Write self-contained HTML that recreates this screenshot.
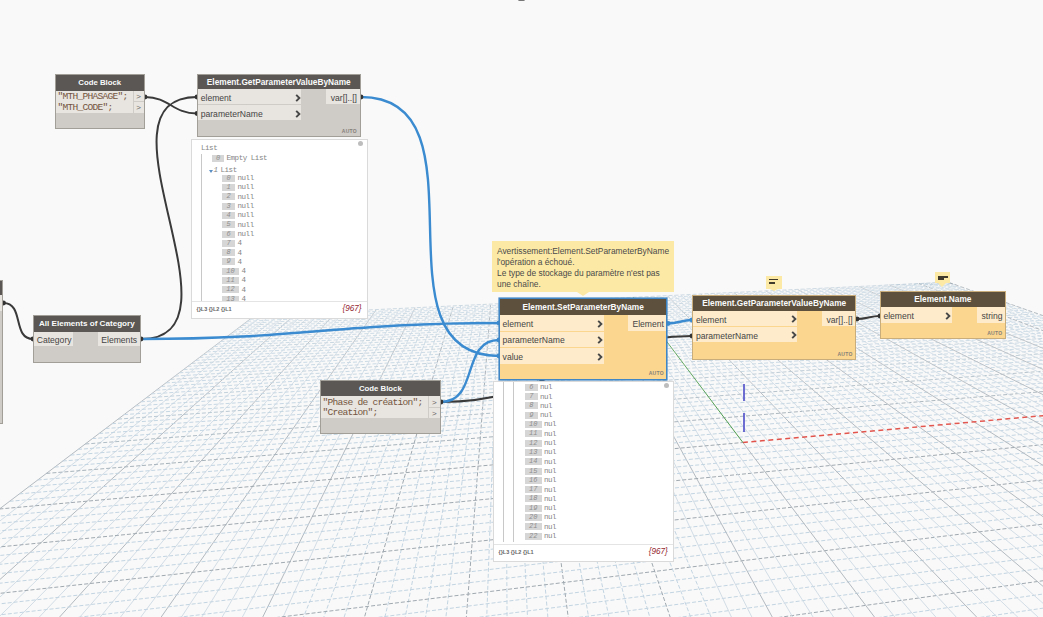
<!DOCTYPE html><html><head><meta charset="utf-8"><style>
*{margin:0;padding:0;box-sizing:border-box}
html,body{width:1043px;height:617px;overflow:hidden;background:#f9f9f9;font-family:"Liberation Sans",sans-serif}
svg{position:absolute;left:0;top:0}
.n{position:absolute;background:#cfcbc6;box-shadow:0 0 0 1px #a29e98}
.n>div{position:absolute;white-space:nowrap}
.h{background:#5a5754;color:#fbfbfb;font-weight:bold;font-size:8.3px;text-align:center;left:0;right:0;top:0}
.p{background:#e8e4df;color:#454545;font-size:8.6px}
.y{background:#fbd68e;box-shadow:0 0 0 1px #c9ae7c}
.y>.h{background:#5d513e}
.y>.p{background:#fdebcb}
.sel{box-shadow:0 0 0 1.6px #4186c4}
.au{font-size:5px;font-weight:bold;color:#858079;letter-spacing:0.3px}
.ch{font-size:7.5px;font-weight:bold;color:#454545}
.pv{position:absolute;background:#fff;box-shadow:0 0 0 1px #dadada;overflow:hidden}
.pv>div{position:absolute;white-space:nowrap}
.m{font-family:"Liberation Mono",monospace}
.bd{background:#d6d6d6;color:#8e8e8e;font-style:italic;font-size:7px;text-align:center}
.it{color:#858585;font-size:7.5px;letter-spacing:-0.45px}
</style></head><body>
<svg width="1043" height="617" viewBox="0 0 1043 617"><line x1="-1934.9" y1="1974.3" x2="255.0" y2="315.4" stroke="#b3bac0" stroke-width="1"/>
<line x1="2349.9" y1="1992.2" x2="2999.1" y2="1390.4" stroke="#b3bac0" stroke-width="1"/>
<line x1="-1870.2" y1="1983.5" x2="263.3" y2="315.0" stroke="#d2dde6" stroke-width="1"/>
<line x1="1961.1" y1="1993.6" x2="2998.2" y2="1186.7" stroke="#d2dde6" stroke-width="1"/>
<line x1="-1804.9" y1="1992.7" x2="271.6" y2="314.6" stroke="#d2dde6" stroke-width="1"/>
<line x1="1572.0" y1="1995.0" x2="2997.5" y2="1039.4" stroke="#d2dde6" stroke-width="1"/>
<line x1="-1683.9" y1="1955.9" x2="279.8" y2="314.2" stroke="#d2dde6" stroke-width="1"/>
<line x1="1182.8" y1="1996.3" x2="2918.0" y2="974.3" stroke="#d2dde6" stroke-width="1"/>
<line x1="-1618.6" y1="1964.9" x2="288.0" y2="313.8" stroke="#d2dde6" stroke-width="1"/>
<line x1="793.3" y1="1997.7" x2="2812.4" y2="937.2" stroke="#d2dde6" stroke-width="1"/>
<line x1="-1552.6" y1="1973.9" x2="296.2" y2="313.4" stroke="#b3bac0" stroke-width="1"/>
<line x1="403.6" y1="1999.1" x2="2715.5" y2="903.2" stroke="#b3bac0" stroke-width="1"/>
<line x1="-1486.1" y1="1983.0" x2="304.4" y2="313.1" stroke="#d2dde6" stroke-width="1"/>
<line x1="35.5" y1="1991.0" x2="2626.5" y2="871.9" stroke="#d2dde6" stroke-width="1"/>
<line x1="-1418.8" y1="1992.2" x2="312.5" y2="312.7" stroke="#d2dde6" stroke-width="1"/>
<line x1="-352.7" y1="1992.4" x2="2544.4" y2="843.1" stroke="#c3d5e2" stroke-width="1" stroke-dasharray="4 2"/>
<line x1="-1305.3" y1="1955.5" x2="320.6" y2="312.3" stroke="#d2dde6" stroke-width="1"/>
<line x1="-741.2" y1="1993.8" x2="2468.4" y2="816.4" stroke="#c3d5e2" stroke-width="1" stroke-dasharray="4 2"/>
<line x1="-1238.1" y1="1964.4" x2="328.6" y2="311.9" stroke="#d2dde6" stroke-width="1"/>
<line x1="-1129.8" y1="1995.1" x2="2397.9" y2="791.6" stroke="#c3d5e2" stroke-width="1" stroke-dasharray="4 2"/>
<line x1="-1170.3" y1="1973.5" x2="336.6" y2="311.5" stroke="#b3bac0" stroke-width="1"/>
<line x1="-1518.7" y1="1996.5" x2="2332.2" y2="768.5" stroke="#a0a9b0" stroke-width="1" stroke-dasharray="4 2"/>
<line x1="-1101.7" y1="1982.6" x2="344.6" y2="311.1" stroke="#d2dde6" stroke-width="1"/>
<line x1="-1907.8" y1="1997.9" x2="2271.0" y2="747.0" stroke="#c3d5e2" stroke-width="1" stroke-dasharray="4 2"/>
<line x1="-1032.5" y1="1991.8" x2="352.6" y2="310.7" stroke="#d2dde6" stroke-width="1"/>
<line x1="-1772.3" y1="1851.2" x2="2213.7" y2="726.9" stroke="#c3d5e2" stroke-width="1" stroke-dasharray="4 2"/>
<line x1="-926.6" y1="1955.1" x2="360.5" y2="310.4" stroke="#d2dde6" stroke-width="1"/>
<line x1="-1579.9" y1="1705.4" x2="2160.0" y2="708.0" stroke="#c3d5e2" stroke-width="1" stroke-dasharray="4 2"/>
<line x1="-857.5" y1="1964.0" x2="368.4" y2="310.0" stroke="#d2dde6" stroke-width="1"/>
<line x1="-1417.5" y1="1582.4" x2="2109.6" y2="690.3" stroke="#c3d5e2" stroke-width="1" stroke-dasharray="4 2"/>
<line x1="-787.7" y1="1973.1" x2="376.3" y2="309.6" stroke="#b3bac0" stroke-width="1"/>
<line x1="-1278.5" y1="1477.1" x2="2062.2" y2="673.6" stroke="#a0a9b0" stroke-width="1" stroke-dasharray="4 2"/>
<line x1="-717.2" y1="1982.2" x2="384.1" y2="309.2" stroke="#d2dde6" stroke-width="1"/>
<line x1="-1158.3" y1="1386.0" x2="2017.5" y2="657.9" stroke="#c3d5e2" stroke-width="1" stroke-dasharray="4 2"/>
<line x1="-646.1" y1="1991.4" x2="391.9" y2="308.9" stroke="#d2dde6" stroke-width="1"/>
<line x1="-1053.3" y1="1306.5" x2="1975.2" y2="643.1" stroke="#c3d5e2" stroke-width="1" stroke-dasharray="4 2"/>
<line x1="-547.7" y1="1954.7" x2="399.7" y2="308.5" stroke="#d2dde6" stroke-width="1"/>
<line x1="-960.7" y1="1236.4" x2="1935.3" y2="629.1" stroke="#c3d5e2" stroke-width="1" stroke-dasharray="4 2"/>
<line x1="-476.7" y1="1963.6" x2="407.4" y2="308.1" stroke="#d2dde6" stroke-width="1"/>
<line x1="-878.6" y1="1174.1" x2="1897.5" y2="615.8" stroke="#c3d5e2" stroke-width="1" stroke-dasharray="4 2"/>
<line x1="-405.0" y1="1972.6" x2="415.1" y2="307.8" stroke="#b3bac0" stroke-width="1"/>
<line x1="-805.1" y1="1118.5" x2="1861.6" y2="603.2" stroke="#a0a9b0" stroke-width="1" stroke-dasharray="4 2"/>
<line x1="-332.6" y1="1981.7" x2="422.8" y2="307.4" stroke="#d2dde6" stroke-width="1"/>
<line x1="-739.1" y1="1068.5" x2="1827.6" y2="591.2" stroke="#c3d5e2" stroke-width="1" stroke-dasharray="4 2"/>
<line x1="-259.5" y1="1991.0" x2="430.5" y2="307.0" stroke="#c3d5e2" stroke-width="1" stroke-dasharray="4 2"/>
<line x1="-679.4" y1="1023.2" x2="1795.2" y2="579.8" stroke="#c3d5e2" stroke-width="1" stroke-dasharray="4 2"/>
<line x1="-168.6" y1="1954.2" x2="438.1" y2="306.7" stroke="#c3d5e2" stroke-width="1" stroke-dasharray="4 2"/>
<line x1="-625.2" y1="982.2" x2="1764.3" y2="569.0" stroke="#c3d5e2" stroke-width="1" stroke-dasharray="4 2"/>
<line x1="-95.7" y1="1963.2" x2="445.7" y2="306.3" stroke="#c3d5e2" stroke-width="1" stroke-dasharray="4 2"/>
<line x1="-575.7" y1="944.7" x2="1734.9" y2="558.7" stroke="#c3d5e2" stroke-width="1" stroke-dasharray="4 2"/>
<line x1="-22.1" y1="1972.2" x2="453.3" y2="305.9" stroke="#a0a9b0" stroke-width="1" stroke-dasharray="4 2"/>
<line x1="-530.4" y1="910.3" x2="1706.9" y2="548.8" stroke="#a0a9b0" stroke-width="1" stroke-dasharray="4 2"/>
<line x1="52.2" y1="1981.3" x2="460.8" y2="305.6" stroke="#c3d5e2" stroke-width="1" stroke-dasharray="4 2"/>
<line x1="-488.7" y1="878.8" x2="1680.0" y2="539.4" stroke="#c3d5e2" stroke-width="1" stroke-dasharray="4 2"/>
<line x1="127.3" y1="1990.5" x2="468.3" y2="305.2" stroke="#c3d5e2" stroke-width="1" stroke-dasharray="4 2"/>
<line x1="-450.2" y1="849.6" x2="1654.4" y2="530.4" stroke="#c3d5e2" stroke-width="1" stroke-dasharray="4 2"/>
<line x1="203.2" y1="1999.8" x2="475.8" y2="304.8" stroke="#c3d5e2" stroke-width="1" stroke-dasharray="4 2"/>
<line x1="-414.7" y1="822.7" x2="1629.9" y2="521.8" stroke="#c3d5e2" stroke-width="1" stroke-dasharray="4 2"/>
<line x1="285.4" y1="1962.7" x2="483.2" y2="304.5" stroke="#c3d5e2" stroke-width="1" stroke-dasharray="4 2"/>
<line x1="-381.6" y1="797.7" x2="1606.3" y2="513.5" stroke="#c3d5e2" stroke-width="1" stroke-dasharray="4 2"/>
<line x1="360.9" y1="1971.8" x2="490.7" y2="304.1" stroke="#a0a9b0" stroke-width="1" stroke-dasharray="4 2"/>
<line x1="-350.9" y1="774.4" x2="1583.8" y2="505.6" stroke="#a0a9b0" stroke-width="1" stroke-dasharray="4 2"/>
<line x1="437.2" y1="1980.9" x2="498.1" y2="303.8" stroke="#c3d5e2" stroke-width="1" stroke-dasharray="4 2"/>
<line x1="-322.2" y1="752.7" x2="1562.1" y2="498.0" stroke="#c3d5e2" stroke-width="1" stroke-dasharray="4 2"/>
<line x1="514.2" y1="1990.1" x2="505.4" y2="303.4" stroke="#c3d5e2" stroke-width="1" stroke-dasharray="4 2"/>
<line x1="-295.4" y1="732.4" x2="1541.3" y2="490.7" stroke="#c3d5e2" stroke-width="1" stroke-dasharray="4 2"/>
<line x1="592.1" y1="1999.4" x2="512.8" y2="303.1" stroke="#c3d5e2" stroke-width="1" stroke-dasharray="4 2"/>
<line x1="-270.3" y1="713.3" x2="1521.3" y2="483.6" stroke="#c3d5e2" stroke-width="1" stroke-dasharray="4 2"/>
<line x1="666.6" y1="1962.3" x2="520.1" y2="302.7" stroke="#c3d5e2" stroke-width="1" stroke-dasharray="4 2"/>
<line x1="-246.7" y1="695.4" x2="1502.1" y2="476.9" stroke="#c3d5e2" stroke-width="1" stroke-dasharray="4 2"/>
<line x1="744.1" y1="1971.3" x2="527.3" y2="302.4" stroke="#a0a9b0" stroke-width="1" stroke-dasharray="4 2"/>
<line x1="-224.5" y1="678.6" x2="1483.5" y2="470.4" stroke="#a0a9b0" stroke-width="1" stroke-dasharray="4 2"/>
<line x1="822.3" y1="1980.5" x2="534.6" y2="302.0" stroke="#c3d5e2" stroke-width="1" stroke-dasharray="4 2"/>
<line x1="-203.5" y1="662.8" x2="1465.7" y2="464.1" stroke="#c3d5e2" stroke-width="1" stroke-dasharray="4 2"/>
<line x1="901.3" y1="1989.7" x2="541.8" y2="301.7" stroke="#c3d5e2" stroke-width="1" stroke-dasharray="4 2"/>
<line x1="-183.8" y1="647.8" x2="1448.5" y2="458.0" stroke="#c3d5e2" stroke-width="1" stroke-dasharray="4 2"/>
<line x1="981.1" y1="1999.0" x2="549.0" y2="301.3" stroke="#c3d5e2" stroke-width="1" stroke-dasharray="4 2"/>
<line x1="-165.1" y1="633.6" x2="1431.9" y2="452.2" stroke="#c3d5e2" stroke-width="1" stroke-dasharray="4 2"/>
<line x1="1048.0" y1="1961.9" x2="556.2" y2="301.0" stroke="#c3d5e2" stroke-width="1" stroke-dasharray="4 2"/>
<line x1="-147.4" y1="620.2" x2="1415.8" y2="446.6" stroke="#c3d5e2" stroke-width="1" stroke-dasharray="4 2"/>
<line x1="1127.4" y1="1970.9" x2="563.3" y2="300.7" stroke="#a0a9b0" stroke-width="1" stroke-dasharray="4 2"/>
<line x1="-130.6" y1="607.5" x2="1400.3" y2="441.1" stroke="#a0a9b0" stroke-width="1" stroke-dasharray="4 2"/>
<line x1="1207.6" y1="1980.0" x2="570.5" y2="300.3" stroke="#c3d5e2" stroke-width="1" stroke-dasharray="4 2"/>
<line x1="-114.7" y1="595.4" x2="1385.4" y2="435.9" stroke="#c3d5e2" stroke-width="1" stroke-dasharray="4 2"/>
<line x1="1288.6" y1="1989.2" x2="577.6" y2="300.0" stroke="#c3d5e2" stroke-width="1" stroke-dasharray="4 2"/>
<line x1="-99.5" y1="583.9" x2="1370.9" y2="430.8" stroke="#c3d5e2" stroke-width="1" stroke-dasharray="4 2"/>
<line x1="1370.4" y1="1998.6" x2="584.6" y2="299.6" stroke="#d2dde6" stroke-width="1"/>
<line x1="-85.1" y1="573.0" x2="1356.9" y2="425.9" stroke="#c3d5e2" stroke-width="1" stroke-dasharray="4 2"/>
<line x1="1429.6" y1="1961.5" x2="591.7" y2="299.3" stroke="#d2dde6" stroke-width="1"/>
<line x1="-71.3" y1="562.6" x2="1343.3" y2="421.1" stroke="#c3d5e2" stroke-width="1" stroke-dasharray="4 2"/>
<line x1="1510.9" y1="1970.5" x2="598.7" y2="299.0" stroke="#b3bac0" stroke-width="1"/>
<line x1="-58.2" y1="552.6" x2="1330.2" y2="416.5" stroke="#a0a9b0" stroke-width="1" stroke-dasharray="4 2"/>
<line x1="1593.0" y1="1979.6" x2="605.7" y2="298.6" stroke="#d2dde6" stroke-width="1"/>
<line x1="-45.6" y1="543.1" x2="1317.4" y2="412.0" stroke="#c3d5e2" stroke-width="1" stroke-dasharray="4 2"/>
<line x1="1676.0" y1="1988.8" x2="612.6" y2="298.3" stroke="#d2dde6" stroke-width="1"/>
<line x1="-33.6" y1="534.0" x2="1305.1" y2="407.7" stroke="#c3d5e2" stroke-width="1" stroke-dasharray="4 2"/>
<line x1="1759.8" y1="1998.1" x2="619.6" y2="298.0" stroke="#d2dde6" stroke-width="1"/>
<line x1="-22.1" y1="525.3" x2="1293.1" y2="403.5" stroke="#c3d5e2" stroke-width="1" stroke-dasharray="4 2"/>
<line x1="1811.3" y1="1961.0" x2="626.5" y2="297.6" stroke="#d2dde6" stroke-width="1"/>
<line x1="-11.1" y1="517.0" x2="1281.5" y2="399.4" stroke="#c3d5e2" stroke-width="1" stroke-dasharray="4 2"/>
<line x1="1912.0" y1="1993.2" x2="742.9" y2="442.5" stroke="#b3bac0" stroke-width="1"/>
<line x1="-0.6" y1="509.0" x2="742.9" y2="442.5" stroke="#a0a9b0" stroke-width="1" stroke-dasharray="4 2"/>
<line x1="1978.6" y1="1979.2" x2="640.2" y2="297.0" stroke="#d2dde6" stroke-width="1"/>
<line x1="9.6" y1="501.3" x2="1259.2" y2="391.6" stroke="#c3d5e2" stroke-width="1" stroke-dasharray="4 2"/>
<line x1="2063.6" y1="1988.4" x2="647.0" y2="296.6" stroke="#d2dde6" stroke-width="1"/>
<line x1="19.3" y1="493.9" x2="1248.6" y2="387.8" stroke="#c3d5e2" stroke-width="1" stroke-dasharray="4 2"/>
<line x1="2149.4" y1="1997.7" x2="653.9" y2="296.3" stroke="#d2dde6" stroke-width="1"/>
<line x1="28.7" y1="486.8" x2="1238.2" y2="384.2" stroke="#c3d5e2" stroke-width="1" stroke-dasharray="4 2"/>
<line x1="2193.2" y1="1960.6" x2="660.6" y2="296.0" stroke="#d2dde6" stroke-width="1"/>
<line x1="37.7" y1="480.0" x2="1228.2" y2="380.6" stroke="#c3d5e2" stroke-width="1" stroke-dasharray="4 2"/>
<line x1="2278.4" y1="1969.6" x2="667.4" y2="295.7" stroke="#b3bac0" stroke-width="1"/>
<line x1="46.4" y1="473.4" x2="1218.4" y2="377.2" stroke="#a7b3bb" stroke-width="1" stroke-dasharray="4 2"/>
<line x1="2364.4" y1="1978.8" x2="674.1" y2="295.3" stroke="#d2dde6" stroke-width="1"/>
<line x1="54.7" y1="467.1" x2="1208.8" y2="373.8" stroke="#c3d5e2" stroke-width="1" stroke-dasharray="4 2"/>
<line x1="2403.6" y1="1942.4" x2="680.9" y2="295.0" stroke="#d2dde6" stroke-width="1"/>
<line x1="62.8" y1="461.0" x2="1199.5" y2="370.6" stroke="#c3d5e2" stroke-width="1" stroke-dasharray="4 2"/>
<line x1="2441.4" y1="1907.4" x2="687.5" y2="294.7" stroke="#d2dde6" stroke-width="1"/>
<line x1="70.5" y1="455.1" x2="1190.5" y2="367.4" stroke="#c3d5e2" stroke-width="1" stroke-dasharray="4 2"/>
<line x1="2477.7" y1="1873.8" x2="694.2" y2="294.4" stroke="#d2dde6" stroke-width="1"/>
<line x1="78.0" y1="449.4" x2="1181.7" y2="364.3" stroke="#c3d5e2" stroke-width="1" stroke-dasharray="4 2"/>
<line x1="2512.6" y1="1841.3" x2="700.8" y2="294.1" stroke="#b3bac0" stroke-width="1"/>
<line x1="85.3" y1="444.0" x2="1173.1" y2="361.3" stroke="#afbdc6" stroke-width="1" stroke-dasharray="4 2"/>
<line x1="2546.3" y1="1810.1" x2="707.5" y2="293.7" stroke="#d2dde6" stroke-width="1"/>
<line x1="92.3" y1="438.6" x2="1164.7" y2="358.3" stroke="#c3d5e2" stroke-width="1" stroke-dasharray="4 2"/>
<line x1="2578.8" y1="1780.0" x2="714.0" y2="293.4" stroke="#d2dde6" stroke-width="1"/>
<line x1="99.1" y1="433.5" x2="1156.5" y2="355.5" stroke="#c3d5e2" stroke-width="1" stroke-dasharray="4 2"/>
<line x1="2610.2" y1="1750.9" x2="720.6" y2="293.1" stroke="#d2dde6" stroke-width="1"/>
<line x1="105.6" y1="428.5" x2="1148.6" y2="352.7" stroke="#c3d5e2" stroke-width="1" stroke-dasharray="4 2"/>
<line x1="2640.5" y1="1722.8" x2="727.2" y2="292.8" stroke="#d2dde6" stroke-width="1"/>
<line x1="112.0" y1="423.7" x2="1140.8" y2="349.9" stroke="#c3d5e2" stroke-width="1" stroke-dasharray="4 2"/>
<line x1="2669.8" y1="1695.7" x2="733.7" y2="292.5" stroke="#b3bac0" stroke-width="1"/>
<line x1="118.1" y1="419.1" x2="1133.2" y2="347.3" stroke="#b7c7d2" stroke-width="1" stroke-dasharray="4 2"/>
<line x1="2698.0" y1="1669.5" x2="740.2" y2="292.2" stroke="#d2dde6" stroke-width="1"/>
<line x1="124.1" y1="414.6" x2="1125.8" y2="344.7" stroke="#c3d5e2" stroke-width="1" stroke-dasharray="4 2"/>
<line x1="2725.4" y1="1644.1" x2="746.6" y2="291.9" stroke="#d2dde6" stroke-width="1"/>
<line x1="129.9" y1="410.2" x2="1118.6" y2="342.1" stroke="#c3d5e2" stroke-width="1" stroke-dasharray="4 2"/>
<line x1="2751.9" y1="1619.6" x2="753.1" y2="291.6" stroke="#d2dde6" stroke-width="1"/>
<line x1="135.5" y1="405.9" x2="1111.5" y2="339.6" stroke="#c3d5e2" stroke-width="1" stroke-dasharray="4 2"/>
<line x1="2777.5" y1="1595.8" x2="759.5" y2="291.3" stroke="#d2dde6" stroke-width="1"/>
<line x1="140.9" y1="401.8" x2="1104.6" y2="337.2" stroke="#c3d5e2" stroke-width="1" stroke-dasharray="4 2"/>
<line x1="2802.4" y1="1572.8" x2="765.9" y2="290.9" stroke="#b3bac0" stroke-width="1"/>
<line x1="146.2" y1="397.8" x2="1097.8" y2="334.8" stroke="#bdceda" stroke-width="1" stroke-dasharray="4 2"/>
<line x1="2826.5" y1="1550.5" x2="772.3" y2="290.6" stroke="#d2dde6" stroke-width="1"/>
<line x1="151.3" y1="393.9" x2="1091.2" y2="332.5" stroke="#c3d5e2" stroke-width="1" stroke-dasharray="4 2"/>
<line x1="2849.8" y1="1528.8" x2="778.7" y2="290.3" stroke="#d2dde6" stroke-width="1"/>
<line x1="156.3" y1="390.2" x2="1084.8" y2="330.3" stroke="#c3d5e2" stroke-width="1" stroke-dasharray="4 2"/>
<line x1="2872.5" y1="1507.8" x2="785.0" y2="290.0" stroke="#d2dde6" stroke-width="1"/>
<line x1="161.2" y1="386.5" x2="1078.4" y2="328.0" stroke="#c3d5e2" stroke-width="1" stroke-dasharray="4 2"/>
<line x1="2894.5" y1="1487.4" x2="791.3" y2="289.7" stroke="#d2dde6" stroke-width="1"/>
<line x1="165.9" y1="382.9" x2="1072.3" y2="325.9" stroke="#c3d5e2" stroke-width="1" stroke-dasharray="4 2"/>
<line x1="2915.8" y1="1467.6" x2="797.6" y2="289.4" stroke="#b3bac0" stroke-width="1"/>
<line x1="170.5" y1="379.4" x2="1066.2" y2="323.7" stroke="#bdceda" stroke-width="1" stroke-dasharray="4 2"/>
<line x1="2936.6" y1="1448.4" x2="803.9" y2="289.1" stroke="#d2dde6" stroke-width="1"/>
<line x1="174.9" y1="376.1" x2="1060.3" y2="321.7" stroke="#c3d5e2" stroke-width="1" stroke-dasharray="4 2"/>
<line x1="2956.7" y1="1429.7" x2="810.1" y2="288.8" stroke="#d2dde6" stroke-width="1"/>
<line x1="179.3" y1="372.8" x2="1054.5" y2="319.6" stroke="#c3d5e2" stroke-width="1" stroke-dasharray="4 2"/>
<line x1="2976.3" y1="1411.5" x2="816.4" y2="288.5" stroke="#d2dde6" stroke-width="1"/>
<line x1="183.5" y1="369.6" x2="1048.8" y2="317.6" stroke="#c3d5e2" stroke-width="1" stroke-dasharray="4 2"/>
<line x1="2995.4" y1="1393.9" x2="822.6" y2="288.2" stroke="#d2dde6" stroke-width="1"/>
<line x1="187.6" y1="366.4" x2="1043.2" y2="315.7" stroke="#c3d5e2" stroke-width="1" stroke-dasharray="4 2"/>
<line x1="2972.3" y1="1355.9" x2="828.7" y2="287.9" stroke="#b3bac0" stroke-width="1"/>
<line x1="191.6" y1="363.4" x2="1037.8" y2="313.8" stroke="#bdceda" stroke-width="1" stroke-dasharray="4 2"/>
<line x1="2990.6" y1="1339.7" x2="834.9" y2="287.6" stroke="#d2dde6" stroke-width="1"/>
<line x1="195.6" y1="360.4" x2="1032.5" y2="311.9" stroke="#c3d5e2" stroke-width="1" stroke-dasharray="4 2"/>
<line x1="2968.6" y1="1304.8" x2="841.1" y2="287.3" stroke="#d2dde6" stroke-width="1"/>
<line x1="199.4" y1="357.5" x2="1027.2" y2="310.0" stroke="#c3d5e2" stroke-width="1" stroke-dasharray="4 2"/>
<line x1="2986.2" y1="1289.9" x2="847.2" y2="287.1" stroke="#d2dde6" stroke-width="1"/>
<line x1="203.1" y1="354.7" x2="1022.1" y2="308.2" stroke="#c3d5e2" stroke-width="1" stroke-dasharray="4 2"/>
<line x1="2965.2" y1="1257.9" x2="853.3" y2="286.8" stroke="#d2dde6" stroke-width="1"/>
<line x1="206.8" y1="351.9" x2="1017.1" y2="306.5" stroke="#c3d5e2" stroke-width="1" stroke-dasharray="4 2"/>
<line x1="2982.1" y1="1244.1" x2="859.3" y2="286.5" stroke="#b3bac0" stroke-width="1"/>
<line x1="210.3" y1="349.2" x2="1012.1" y2="304.7" stroke="#bdceda" stroke-width="1" stroke-dasharray="4 2"/>
<line x1="2998.7" y1="1230.7" x2="865.4" y2="286.2" stroke="#d2dde6" stroke-width="1"/>
<line x1="213.8" y1="346.6" x2="1007.3" y2="303.0" stroke="#c3d5e2" stroke-width="1" stroke-dasharray="4 2"/>
<line x1="2978.3" y1="1201.7" x2="871.4" y2="285.9" stroke="#d2dde6" stroke-width="1"/>
<line x1="217.2" y1="344.1" x2="1002.5" y2="301.4" stroke="#c3d5e2" stroke-width="1" stroke-dasharray="4 2"/>
<line x1="2994.3" y1="1189.3" x2="877.5" y2="285.6" stroke="#d2dde6" stroke-width="1"/>
<line x1="220.5" y1="341.5" x2="997.9" y2="299.7" stroke="#c3d5e2" stroke-width="1" stroke-dasharray="4 2"/>
<line x1="2974.9" y1="1162.4" x2="883.4" y2="285.3" stroke="#d2dde6" stroke-width="1"/>
<line x1="223.7" y1="339.1" x2="993.3" y2="298.1" stroke="#c3d5e2" stroke-width="1" stroke-dasharray="4 2"/>
<line x1="2990.3" y1="1150.9" x2="889.4" y2="285.0" stroke="#b3bac0" stroke-width="1"/>
<line x1="226.9" y1="336.7" x2="988.8" y2="296.5" stroke="#bdceda" stroke-width="1" stroke-dasharray="4 2"/>
<line x1="2971.6" y1="1125.9" x2="895.4" y2="284.7" stroke="#d2dde6" stroke-width="1"/>
<line x1="230.0" y1="334.4" x2="984.4" y2="295.0" stroke="#c3d5e2" stroke-width="1" stroke-dasharray="4 2"/>
<line x1="2986.6" y1="1115.1" x2="901.3" y2="284.5" stroke="#c3d5e2" stroke-width="1" stroke-dasharray="4 2"/>
<line x1="233.0" y1="332.1" x2="980.1" y2="293.5" stroke="#c3d5e2" stroke-width="1" stroke-dasharray="4 2"/>
<line x1="2968.6" y1="1091.8" x2="907.2" y2="284.2" stroke="#c3d5e2" stroke-width="1" stroke-dasharray="4 2"/>
<line x1="235.9" y1="329.8" x2="975.8" y2="292.0" stroke="#c3d5e2" stroke-width="1" stroke-dasharray="4 2"/>
<line x1="2983.1" y1="1081.8" x2="913.1" y2="283.9" stroke="#c3d5e2" stroke-width="1" stroke-dasharray="4 2"/>
<line x1="238.8" y1="327.6" x2="971.6" y2="290.5" stroke="#c3d5e2" stroke-width="1" stroke-dasharray="4 2"/>
<line x1="2997.2" y1="1072.0" x2="919.0" y2="283.6" stroke="#a0a9b0" stroke-width="1" stroke-dasharray="4 2"/>
<line x1="241.7" y1="325.5" x2="967.5" y2="289.1" stroke="#bdceda" stroke-width="1" stroke-dasharray="4 2"/>
<line x1="2979.8" y1="1050.6" x2="924.8" y2="283.3" stroke="#c3d5e2" stroke-width="1" stroke-dasharray="4 2"/>
<line x1="244.4" y1="323.4" x2="963.5" y2="287.6" stroke="#c3d5e2" stroke-width="1" stroke-dasharray="4 2"/>
<line x1="2993.5" y1="1041.4" x2="930.7" y2="283.1" stroke="#c3d5e2" stroke-width="1" stroke-dasharray="4 2"/>
<line x1="247.1" y1="321.3" x2="959.5" y2="286.3" stroke="#c3d5e2" stroke-width="1" stroke-dasharray="4 2"/>
<line x1="2976.7" y1="1021.4" x2="936.5" y2="282.8" stroke="#c3d5e2" stroke-width="1" stroke-dasharray="4 2"/>
<line x1="249.8" y1="319.3" x2="955.6" y2="284.9" stroke="#c3d5e2" stroke-width="1" stroke-dasharray="4 2"/>
<line x1="2990.1" y1="1012.7" x2="942.3" y2="282.5" stroke="#c3d5e2" stroke-width="1" stroke-dasharray="4 2"/>
<line x1="252.4" y1="317.4" x2="951.8" y2="283.5" stroke="#c3d5e2" stroke-width="1" stroke-dasharray="4 2"/>
<line x1="2973.8" y1="994.0" x2="948.0" y2="282.2" stroke="#a0a9b0" stroke-width="1" stroke-dasharray="4 2"/>
<line x1="255.0" y1="315.4" x2="948.0" y2="282.2" stroke="#bdceda" stroke-width="1" stroke-dasharray="4 2"/>
<line x1="742.9" y1="442.5" x2="1270.2" y2="395.4" stroke="#e2524a" stroke-width="1.5" stroke-dasharray="5 3.5"/>
<line x1="742.9" y1="442.5" x2="633.4" y2="297.3" stroke="#4a9a4a" stroke-width="1"/><defs><linearGradient id="fg" x1="0" y1="285" x2="0" y2="440" gradientUnits="userSpaceOnUse"><stop offset="0" stop-color="#f9f9f9" stop-opacity="0.3"/><stop offset="1" stop-color="#f9f9f9" stop-opacity="0"/></linearGradient></defs><rect x="0" y="285" width="1043" height="155" fill="url(#fg)"/></svg><svg width="1043" height="617" viewBox="0 0 1043 617"><path d="M145,97 C169.5497581454482,97 172.4502418545518,113.5 197,113.5" stroke="#3a3a3a" stroke-width="2" fill="none"/><path d="M141,339 C252.777681135368,339 85.222318864632,97 197,97" stroke="#3a3a3a" stroke-width="2" fill="none"/><path d="M3.5,303 C24.444345895730425,303 12.055654104269575,339 33,339" stroke="#3a3a3a" stroke-width="2" fill="none"/><path d="M441,402 C557.7895222183909,402 575.2104777816091,336 692,336" stroke="#3a3a3a" stroke-width="2" fill="none"/><path d="M857,319 C867.4376721542689,319 869.5623278457311,316 880,316" stroke="#3a3a3a" stroke-width="2" fill="none"/><path d="M361,97 C493.06177531746266,97 366.93822468253734,356 499,356" stroke="#3a8bd0" stroke-width="2.4" fill="none"/><path d="M141,339 C302.2608135909031,339 337.7391864090969,323 499,323" stroke="#3a8bd0" stroke-width="2.4" fill="none"/><path d="M441,402 C479.20497349822404,402 460.79502650177596,340 499,340" stroke="#3a8bd0" stroke-width="2.4" fill="none"/><path d="M668,323.5 C678.9142395520714,323.5 681.0857604479286,320 692,320" stroke="#3a8bd0" stroke-width="2.4" fill="none"/><line x1="744" y1="384" x2="744" y2="401" stroke="#5656cc" stroke-width="1.7"/><line x1="744" y1="413" x2="744" y2="432" stroke="#5656cc" stroke-width="1.7"/></svg><div style="position:absolute;left:518px;top:-2px;width:7px;height:3px;border-radius:2px;background:#777"></div><svg width="1043" height="617" viewBox="0 0 1043 617" style="pointer-events:none"><circle cx="145" cy="97" r="2.4" fill="#333"/><circle cx="197" cy="97" r="2.4" fill="#333"/><circle cx="197" cy="113.5" r="2.4" fill="#333"/><circle cx="141" cy="339" r="2.4" fill="#333"/><circle cx="33" cy="339" r="2.4" fill="#333"/><circle cx="3.5" cy="303" r="2.4" fill="#333"/><circle cx="361" cy="97" r="2.4" fill="#333"/><circle cx="441" cy="402" r="2.4" fill="#333"/><circle cx="692" cy="336" r="2.4" fill="#333"/><circle cx="857" cy="319" r="2.4" fill="#333"/><circle cx="880" cy="316" r="2.4" fill="#333"/><circle cx="499" cy="323" r="2.4" fill="#3a8bd0"/><circle cx="499" cy="340" r="2.4" fill="#3a8bd0"/><circle cx="499" cy="356" r="2.4" fill="#3a8bd0"/><circle cx="668" cy="323.5" r="2.4" fill="#3a8bd0"/><circle cx="692" cy="320" r="2.4" fill="#3a8bd0"/></svg><div class="n " style="left:-49.00px;top:281.00px;width:51.40px;height:142.00px"><div class="h" style="height:14.40px;line-height:14.40px"></div><div class="p" style="left:-1.00px;top:14.40px;width:52.40px;height:15.40px;line-height:15.40px;text-align:right;padding-right:2.5px"><span style="position:relative;top:1.8px">x</span></div></div><div class="n " style="left:198.00px;top:74.50px;width:161.50px;height:61.50px"><div class="h" style="height:14.50px;line-height:14.50px">Element.GetParameterValueByName</div><div class="p" style="left:0.00px;top:14.50px;width:103.30px;height:15.40px;line-height:15.40px;"><span style="padding-left:2.7px;position:relative;top:1.8px">element</span></div><svg style="position:absolute;left:95.80px;top:18.00px" width="8" height="10" viewBox="0 0 8 10"><polyline points="2.2,1.8 5.4,5 2.2,8.2" fill="none" stroke="#474747" stroke-width="1.9"/></svg><div class="p" style="left:0.00px;top:30.50px;width:103.30px;height:15.40px;line-height:15.40px;"><span style="padding-left:2.7px;position:relative;top:1.8px">parameterName</span></div><svg style="position:absolute;left:95.80px;top:34.00px" width="8" height="10" viewBox="0 0 8 10"><polyline points="2.2,1.8 5.4,5 2.2,8.2" fill="none" stroke="#474747" stroke-width="1.9"/></svg><div class="p" style="left:128.00px;top:14.50px;width:33.50px;height:15.40px;line-height:15.40px;text-align:right;padding-right:2.5px"><span style="position:relative;top:1.8px">var[]..[]</span></div><div class="au" style="right:2.5px;bottom:2.5px">AUTO</div></div><div class="n " style="left:34.00px;top:316.00px;width:105.60px;height:45.70px"><div class="h" style="height:15.60px;line-height:15.60px;font-size:8.1px">All Elements of Category</div><div class="p" style="left:0.00px;top:15.60px;width:39.20px;height:14.90px;line-height:14.90px;"><span style="padding-left:2.7px;position:relative;top:1.8px">Category</span></div><div class="p" style="left:63.90px;top:15.60px;width:41.70px;height:14.90px;line-height:14.90px;text-align:right;padding-right:2.5px"><span style="position:relative;top:1.8px">Elements</span></div></div><div class="n y" style="left:693.20px;top:295.90px;width:162.00px;height:63.30px"><div class="h" style="height:15.10px;line-height:15.10px">Element.GetParameterValueByName</div><div class="p" style="left:0.00px;top:15.10px;width:104.00px;height:15.40px;line-height:15.40px;"><span style="padding-left:2.7px;position:relative;top:1.8px">element</span></div><svg style="position:absolute;left:96.50px;top:18.60px" width="8" height="10" viewBox="0 0 8 10"><polyline points="2.2,1.8 5.4,5 2.2,8.2" fill="none" stroke="#474747" stroke-width="1.9"/></svg><div class="p" style="left:0.00px;top:31.10px;width:104.00px;height:15.40px;line-height:15.40px;"><span style="padding-left:2.7px;position:relative;top:1.8px">parameterName</span></div><svg style="position:absolute;left:96.50px;top:34.60px" width="8" height="10" viewBox="0 0 8 10"><polyline points="2.2,1.8 5.4,5 2.2,8.2" fill="none" stroke="#474747" stroke-width="1.9"/></svg><div class="p" style="left:129.00px;top:15.10px;width:33.00px;height:15.40px;line-height:15.40px;text-align:right;padding-right:2.5px"><span style="position:relative;top:1.8px">var[]..[]</span></div><div class="au" style="right:2.5px;bottom:2.5px">AUTO</div></div><div class="n y" style="left:880.70px;top:291.70px;width:124.30px;height:46.70px"><div class="h" style="height:15.70px;line-height:15.70px">Element.Name</div><div class="p" style="left:0.00px;top:15.70px;width:71.30px;height:15.70px;line-height:15.70px;"><span style="padding-left:2.7px;position:relative;top:1.8px">element</span></div><svg style="position:absolute;left:63.80px;top:19.35px" width="8" height="10" viewBox="0 0 8 10"><polyline points="2.2,1.8 5.4,5 2.2,8.2" fill="none" stroke="#474747" stroke-width="1.9"/></svg><div class="p" style="left:96.10px;top:15.70px;width:28.20px;height:15.70px;line-height:15.70px;text-align:right;padding-right:2.5px"><span style="position:relative;top:1.8px">string</span></div><div class="au" style="right:2.5px;bottom:2.5px">AUTO</div></div><div class="n " style="left:56.00px;top:75.00px;width:87.50px;height:52.50px"><div class="h" style="height:15.50px;line-height:15.50px;font-size:7.8px">Code Block</div><div class="p" style="left:0.00px;top:15.50px;width:76.50px;height:22.00px;line-height:22.00px;"></div><div class="p" style="left:77.50px;top:15.50px;width:10.00px;height:10.50px;line-height:10.50px;text-align:center;color:#666;font-size:8px"><span style="position:relative;top:1px">&gt;</span></div><div class="p" style="left:77.50px;top:27.00px;width:10.00px;height:10.50px;line-height:10.50px;text-align:center;color:#666;font-size:8px"><span style="position:relative;top:1px">&gt;</span></div><div class="m" style="left:1.50px;top:15.50px;height:12px;line-height:12px;font-size:9.6px;letter-spacing:-0.76px;color:#735640">"MTH_PHASAGE";</div><div class="m" style="left:1.50px;top:26.50px;height:12px;line-height:12px;font-size:9.6px;letter-spacing:-0.76px;color:#735640">"MTH_CODE";</div></div><div class="n " style="left:320.80px;top:381.10px;width:119.10px;height:52.30px"><div class="h" style="height:15.10px;line-height:15.10px;font-size:7.8px">Code Block</div><div class="p" style="left:0.00px;top:15.10px;width:106.90px;height:22.00px;line-height:22.00px;"></div><div class="p" style="left:107.90px;top:15.10px;width:11.20px;height:11.00px;line-height:11.00px;text-align:center;color:#666;font-size:8px"><span style="position:relative;top:1px">&gt;</span></div><div class="p" style="left:107.90px;top:27.10px;width:11.20px;height:10.00px;line-height:10.00px;text-align:center;color:#666;font-size:8px"><span style="position:relative;top:1px">&gt;</span></div><div class="m" style="left:1.70px;top:15.70px;height:12px;line-height:12px;font-size:9.6px;letter-spacing:-0.76px;color:#735640">"Phase de cr&eacute;ation";</div><div class="m" style="left:1.70px;top:26.00px;height:12px;line-height:12px;font-size:9.6px;letter-spacing:-0.76px;color:#735640">"Creation";</div></div><div class="pv" style="left:191.50px;top:139.50px;width:175.10px;height:178.50px"><div style="left:166.10px;top:1.5px;width:5px;height:5px;border-radius:50%;background:#bdbdbd"></div><div class="it m" style="left:9.5px;top:3.5px;line-height:10px">List</div><div style="left:9.5px;top:14px;width:1px;height:150px;background:#c8c8c8"></div><div class="bd m" style="left:20.5px;top:15px;width:12px;height:7px;line-height:7px">0</div><div class="it m" style="left:35px;top:13px;line-height:10px">Empty List</div><div style="left:17.5px;top:30px;width:0;height:0;border-left:2.5px solid transparent;border-right:2.5px solid transparent;border-top:3px solid #5b8fc4"></div><div class="it m" style="left:22px;top:25px;line-height:10px;font-style:italic">1</div><div class="it m" style="left:29px;top:25px;line-height:10px">List</div><div class="bd m" style="left:30.80px;top:35.20px;width:12.50px;height:7px;line-height:7px">0</div><div class="it m" style="left:46.00px;top:33.60px;height:10px;line-height:10px">null</div><div class="bd m" style="left:30.80px;top:44.50px;width:12.50px;height:7px;line-height:7px">1</div><div class="it m" style="left:46.00px;top:42.90px;height:10px;line-height:10px">null</div><div class="bd m" style="left:30.80px;top:53.80px;width:12.50px;height:7px;line-height:7px">2</div><div class="it m" style="left:46.00px;top:52.20px;height:10px;line-height:10px">null</div><div class="bd m" style="left:30.80px;top:63.10px;width:12.50px;height:7px;line-height:7px">3</div><div class="it m" style="left:46.00px;top:61.50px;height:10px;line-height:10px">null</div><div class="bd m" style="left:30.80px;top:72.40px;width:12.50px;height:7px;line-height:7px">4</div><div class="it m" style="left:46.00px;top:70.80px;height:10px;line-height:10px">null</div><div class="bd m" style="left:30.80px;top:81.70px;width:12.50px;height:7px;line-height:7px">5</div><div class="it m" style="left:46.00px;top:80.10px;height:10px;line-height:10px">null</div><div class="bd m" style="left:30.80px;top:91.00px;width:12.50px;height:7px;line-height:7px">6</div><div class="it m" style="left:46.00px;top:89.40px;height:10px;line-height:10px">null</div><div class="bd m" style="left:30.80px;top:100.30px;width:12.50px;height:7px;line-height:7px">7</div><div class="it m" style="left:46.00px;top:98.70px;height:10px;line-height:10px">4</div><div class="bd m" style="left:30.80px;top:109.60px;width:12.50px;height:7px;line-height:7px">8</div><div class="it m" style="left:46.00px;top:108.00px;height:10px;line-height:10px">4</div><div class="bd m" style="left:30.80px;top:118.90px;width:12.50px;height:7px;line-height:7px">9</div><div class="it m" style="left:46.00px;top:117.30px;height:10px;line-height:10px">4</div><div class="bd m" style="left:30.80px;top:128.20px;width:16.50px;height:7px;line-height:7px">10</div><div class="it m" style="left:50.00px;top:126.60px;height:10px;line-height:10px">4</div><div class="bd m" style="left:30.80px;top:137.50px;width:16.50px;height:7px;line-height:7px">11</div><div class="it m" style="left:50.00px;top:135.90px;height:10px;line-height:10px">4</div><div class="bd m" style="left:30.80px;top:146.80px;width:16.50px;height:7px;line-height:7px">12</div><div class="it m" style="left:50.00px;top:145.20px;height:10px;line-height:10px">4</div><div class="bd m" style="left:30.80px;top:156.10px;width:16.50px;height:7px;line-height:7px">13</div><div class="it m" style="left:50.00px;top:154.50px;height:10px;line-height:10px">4</div><div style="left:0;right:0;top:161.00px;bottom:0;background:#fff;border-top:1px solid #e4e4e4"></div><div style="left:5px;top:165.00px;font-size:5.5px;line-height:8px;color:#666;font-weight:bold">{}L3 {}L2 {}L1</div><div style="right:5px;top:164.00px;font-size:8.2px;line-height:10px;color:#951f30;font-style:italic">{967}</div></div><div class="pv" style="left:493.50px;top:381.50px;width:179.30px;height:179.00px"><div style="left:170.30px;top:1.5px;width:5px;height:5px;border-radius:50%;background:#bdbdbd"></div><div style="left:9.8px;top:0;width:1px;height:160px;background:#c8c8c8"></div><div style="left:19.3px;top:0;width:1px;height:160px;background:#c8c8c8"></div><div class="bd m" style="left:31.50px;top:2.30px;width:12.50px;height:7px;line-height:7px">6</div><div class="it m" style="left:46.50px;top:0.70px;height:10px;line-height:10px">nul</div><div class="bd m" style="left:31.50px;top:11.60px;width:12.50px;height:7px;line-height:7px">7</div><div class="it m" style="left:46.50px;top:10.00px;height:10px;line-height:10px">nul</div><div class="bd m" style="left:31.50px;top:20.90px;width:12.50px;height:7px;line-height:7px">8</div><div class="it m" style="left:46.50px;top:19.30px;height:10px;line-height:10px">nul</div><div class="bd m" style="left:31.50px;top:30.20px;width:12.50px;height:7px;line-height:7px">9</div><div class="it m" style="left:46.50px;top:28.60px;height:10px;line-height:10px">nul</div><div class="bd m" style="left:31.50px;top:39.50px;width:16.50px;height:7px;line-height:7px">10</div><div class="it m" style="left:50.50px;top:37.90px;height:10px;line-height:10px">nul</div><div class="bd m" style="left:31.50px;top:48.80px;width:16.50px;height:7px;line-height:7px">11</div><div class="it m" style="left:50.50px;top:47.20px;height:10px;line-height:10px">nul</div><div class="bd m" style="left:31.50px;top:58.10px;width:16.50px;height:7px;line-height:7px">12</div><div class="it m" style="left:50.50px;top:56.50px;height:10px;line-height:10px">nul</div><div class="bd m" style="left:31.50px;top:67.40px;width:16.50px;height:7px;line-height:7px">13</div><div class="it m" style="left:50.50px;top:65.80px;height:10px;line-height:10px">nul</div><div class="bd m" style="left:31.50px;top:76.70px;width:16.50px;height:7px;line-height:7px">14</div><div class="it m" style="left:50.50px;top:75.10px;height:10px;line-height:10px">nul</div><div class="bd m" style="left:31.50px;top:86.00px;width:16.50px;height:7px;line-height:7px">15</div><div class="it m" style="left:50.50px;top:84.40px;height:10px;line-height:10px">nul</div><div class="bd m" style="left:31.50px;top:95.30px;width:16.50px;height:7px;line-height:7px">16</div><div class="it m" style="left:50.50px;top:93.70px;height:10px;line-height:10px">nul</div><div class="bd m" style="left:31.50px;top:104.60px;width:16.50px;height:7px;line-height:7px">17</div><div class="it m" style="left:50.50px;top:103.00px;height:10px;line-height:10px">nul</div><div class="bd m" style="left:31.50px;top:113.90px;width:16.50px;height:7px;line-height:7px">18</div><div class="it m" style="left:50.50px;top:112.30px;height:10px;line-height:10px">nul</div><div class="bd m" style="left:31.50px;top:123.20px;width:16.50px;height:7px;line-height:7px">19</div><div class="it m" style="left:50.50px;top:121.60px;height:10px;line-height:10px">nul</div><div class="bd m" style="left:31.50px;top:132.50px;width:16.50px;height:7px;line-height:7px">20</div><div class="it m" style="left:50.50px;top:130.90px;height:10px;line-height:10px">nul</div><div class="bd m" style="left:31.50px;top:141.80px;width:16.50px;height:7px;line-height:7px">21</div><div class="it m" style="left:50.50px;top:140.20px;height:10px;line-height:10px">nul</div><div class="bd m" style="left:31.50px;top:151.10px;width:16.50px;height:7px;line-height:7px">22</div><div class="it m" style="left:50.50px;top:149.50px;height:10px;line-height:10px">nul</div><div style="left:0;right:0;top:162.00px;bottom:0;background:#fff;border-top:1px solid #e4e4e4"></div><div style="left:5px;top:166.00px;font-size:5.5px;line-height:8px;color:#666;font-weight:bold">{}L3 {}L2 {}L1</div><div style="right:5px;top:165.00px;font-size:8.2px;line-height:10px;color:#951f30;font-style:italic">{967}</div></div><div class="n y sel" style="left:499.90px;top:299.30px;width:166.60px;height:79.30px"><div class="h" style="height:16.00px;line-height:16.00px">Element.SetParameterByName</div><div class="p" style="left:0.00px;top:16.00px;width:104.10px;height:15.70px;line-height:15.70px;"><span style="padding-left:2.7px;position:relative;top:1.8px">element</span></div><svg style="position:absolute;left:96.60px;top:19.65px" width="8" height="10" viewBox="0 0 8 10"><polyline points="2.2,1.8 5.4,5 2.2,8.2" fill="none" stroke="#474747" stroke-width="1.9"/></svg><div class="p" style="left:0.00px;top:32.30px;width:104.10px;height:15.70px;line-height:15.70px;"><span style="padding-left:2.7px;position:relative;top:1.8px">parameterName</span></div><svg style="position:absolute;left:96.60px;top:35.95px" width="8" height="10" viewBox="0 0 8 10"><polyline points="2.2,1.8 5.4,5 2.2,8.2" fill="none" stroke="#474747" stroke-width="1.9"/></svg><div class="p" style="left:0.00px;top:48.60px;width:104.10px;height:15.70px;line-height:15.70px;"><span style="padding-left:2.7px;position:relative;top:1.8px">value</span></div><svg style="position:absolute;left:96.60px;top:52.25px" width="8" height="10" viewBox="0 0 8 10"><polyline points="2.2,1.8 5.4,5 2.2,8.2" fill="none" stroke="#474747" stroke-width="1.9"/></svg><div class="p" style="left:128.60px;top:16.00px;width:38.00px;height:15.70px;line-height:15.70px;text-align:right;padding-right:2.5px"><span style="position:relative;top:1.8px">Element</span></div><div class="au" style="right:2.5px;bottom:2.5px">AUTO</div></div><div style="position:absolute;left:492px;top:241px;width:181.5px;height:51.3px;background:#fce9a5;color:#4a4a4a;font-size:8.4px;line-height:11px;padding:4.5px 0 0 5px;white-space:nowrap">Avertissement:Element.SetParameterByName<br>l'op&eacute;ration a &eacute;chou&eacute;.<br>Le type de stockage du param&egrave;tre n'est pas<br>une cha&icirc;ne.</div><div style="position:absolute;left:577px;top:292.3px;width:0;height:0;border-left:6px solid transparent;border-right:6px solid transparent;border-top:4px solid #fce9a5"></div><div style="position:absolute;left:766.00px;top:275.70px;width:15.60px;height:12.90px;background:#fce9a5"></div><div style="position:absolute;left:770.00px;top:288.60px;width:0;height:0;border-left:4px solid transparent;border-right:4px solid transparent;border-top:2.90px solid #fce9a5"></div><div style="position:absolute;left:768.90px;top:278.60px;width:9.60px;height:1.80px;background:#3f3a2c"></div><div style="position:absolute;left:768.90px;top:282.20px;width:6.60px;height:1.80px;background:#3f3a2c"></div><div style="position:absolute;left:934.70px;top:272.10px;width:15.80px;height:10.70px;background:#fce9a5"></div><div style="position:absolute;left:938.40px;top:282.80px;width:0;height:0;border-left:4px solid transparent;border-right:4px solid transparent;border-top:4.50px solid #fce9a5"></div><div style="position:absolute;left:938.00px;top:275.60px;width:10.00px;height:2.80px;background:#3f3a2c"></div><div style="position:absolute;left:938.00px;top:278.30px;width:5.60px;height:1.60px;background:#3f3a2c"></div>
</body></html>
